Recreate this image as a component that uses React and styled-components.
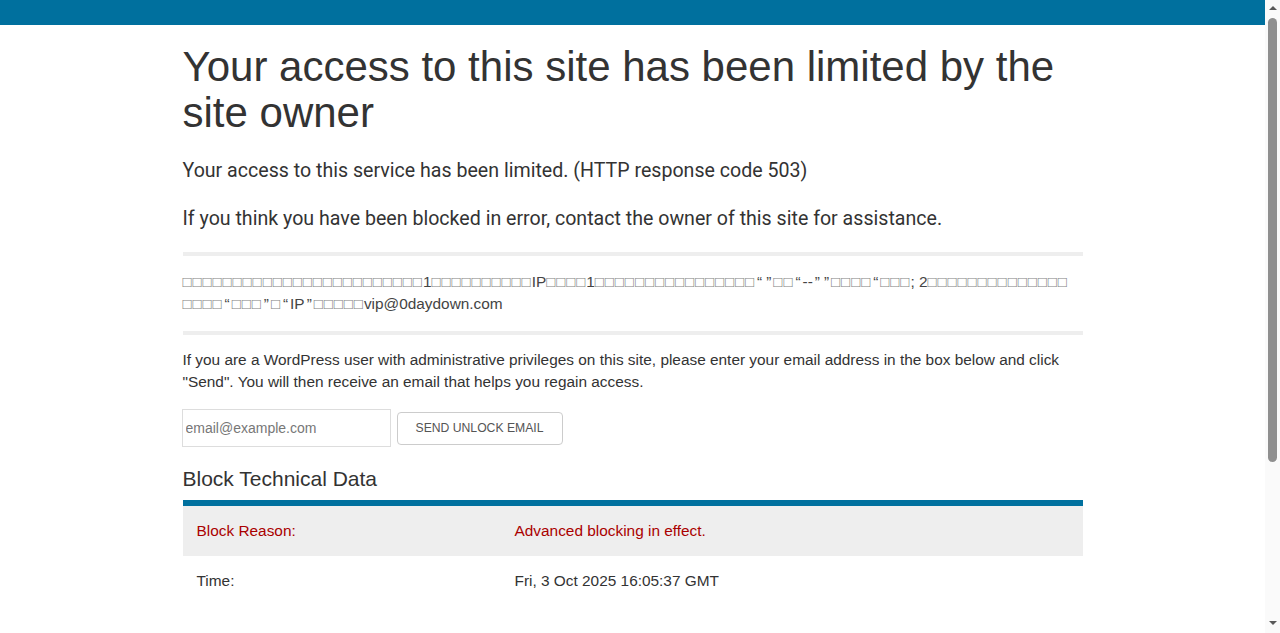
import React from "react";
import styled, { createGlobalStyle } from "styled-components";

const GlobalStyle = createGlobalStyle`
  html, body {
    margin: 0;
    height: 100%;
    overflow: hidden;
  }
  body {
    background: #fff;
    color: #333;
    font-family: "Liberation Sans", Arial, sans-serif;
  }
`;

const Shell = styled.div`
  display: flex;
  height: 100vh;
`;

const Page = styled.div`
  flex: 1;
  min-width: 0;
  overflow-y: auto;
  scrollbar-width: none;
`;

const ScrollTrack = styled.div`
  display: flex;
  flex-direction: column;
  align-items: center;
  width: 15px;
  padding: 6px 0 8px;
  box-sizing: border-box;
  background: #fafafa;
`;

const Arrow = styled.span`
  width: 0;
  height: 0;
  border-left: 4.5px solid transparent;
  border-right: 4.5px solid transparent;
  ${(p) =>
    p.$down ? "border-top: 4px solid #595959;" : "border-bottom: 4px solid #595959;"}
`;

const Thumb = styled.div`
  width: 9px;
  height: 444px;
  margin: 8px 0 auto;
  border-radius: 5px;
  background: #8f8f8f;
`;

const TopBar = styled.div`
  height: 25px;
  background: #00709e;
`;

const Main = styled.main`
  max-width: 900px;
  margin: 0 auto;
  padding-bottom: 40px;
`;

const Title = styled.h1`
  margin: 19px 0 20px;
  font: 400 42px/46px "Liberation Sans", Arial, sans-serif;
  color: #333;
`;

const Lead = styled.p`
  margin: 0 0 19px;
  padding-top: 1px;
  font: 400 19.6px/28px Roboto, "Liberation Sans", sans-serif;
  color: #333;
`;

const Rule = styled.hr`
  border: 0;
  height: 4px;
  margin: 0;
  background: #eeeeee;
`;

const Notice = styled.p`
  margin: 15px 0 16px;
  font-size: 15.4px;
  line-height: 22px;
  color: #444;
  white-space: nowrap;
`;

const Tofu = styled.span`
  letter-spacing: 0.72px;
  color: #808080;
`;

const Quote = styled.span`
  padding: 0 2px;
`;

const Info = styled.p`
  margin: 14px 0 16px;
  font-size: 15.4px;
  line-height: 22px;
  color: #333;
`;

const UnlockForm = styled.form`
  display: flex;
  align-items: center;
  gap: 6px;
  margin-left: -1px;
`;

const EmailInput = styled.input`
  box-sizing: border-box;
  width: 209px;
  height: 38px;
  padding: 0 3px;
  border: 1px solid #dddddd;
  font: 14px "Liberation Sans", Arial, sans-serif;
  color: #333;
  &::placeholder {
    color: #777;
  }
`;

const SendButton = styled.button`
  box-sizing: border-box;
  height: 33px;
  padding: 0 18px;
  border: 1px solid #cccccc;
  border-radius: 4px;
  background: #fff;
  font: 12.2px "Liberation Sans", Arial, sans-serif;
  color: #555;
  text-transform: uppercase;
`;

const SectionTitle = styled.h2`
  margin: ${(p) => p.$top || 20}px 0 9px;
  font: 400 21px/24px "Liberation Sans", Arial, sans-serif;
  color: #333;
`;

const DataTable = styled.div`
  border-top: 6px solid #00709e;
`;

const DataRow = styled.div`
  display: grid;
  grid-template-columns: 318px 1fr;
  align-items: center;
  height: 50px;
  padding: 0 14px;
  background: ${(p) => (p.$shaded ? "#eeeeee" : "transparent")};
  color: ${(p) => (p.$alert ? "#aa0000" : "#333")};
  font-size: 15.4px;
`;

const Footer = styled.p`
  margin: 10px 0;
  font-size: 15.4px;
  line-height: 22px;
  color: #333;
`;

const Link = styled.a`
  color: #00709e;
  text-decoration: none;
`;

const noticeLines = [
  "□□□□□□□□□□□□□□□□□□□□□□□□1□□□□□□□□□□IP□□□□1□□□□□□□□□□□□□□□□“”□□“--””□□□□“□□□; 2□□□□□□□□□□□□□□",
  "□□□□“□□□”□“IP”□□□□□vip@0daydown.com",
];

// boxes and quotes get their own spacing so the runs line up with the original
const spaced = (text) =>
  text.split(/(□+|[“”])/).map((part, i) => {
    if (part.startsWith("□")) return <Tofu key={i}>{part}</Tofu>;
    if (part === "“" || part === "”") return <Quote key={i}>{part}</Quote>;
    return part;
  });

const rows = [
  { label: "Block Reason:", value: "Advanced blocking in effect.", alert: true },
  { label: "Time:", value: "Fri, 3 Oct 2025 16:05:37 GMT" },
];

export default function App() {
  return (
    <Shell>
      <GlobalStyle />
      <Page>
        <TopBar />
        <Main>
          <Title>Your access to this site has been limited by the site owner</Title>
          <Lead>Your access to this service has been limited. (HTTP response code 503)</Lead>
          <Lead>If you think you have been blocked in error, contact the owner of this site for assistance.</Lead>
          <Rule />
          <Notice>
            {spaced(noticeLines[0])}
            <br />
            {spaced(noticeLines[1])}
          </Notice>
          <Rule />
          <Info>
            If you are a WordPress user with administrative privileges on this site, please enter your email
            address in the box below and click "Send". You will then receive an email that helps you regain access.
          </Info>
          <UnlockForm onSubmit={(e) => e.preventDefault()}>
            <EmailInput type="email" placeholder="email@example.com" />
            <SendButton type="submit">Send Unlock Email</SendButton>
          </UnlockForm>
          <SectionTitle>Block Technical Data</SectionTitle>
          <DataTable>
            {rows.map((row, i) => (
              <DataRow key={row.label} $shaded={i % 2 === 0} $alert={row.alert}>
                <span>{row.label}</span>
                <span>{row.value}</span>
              </DataRow>
            ))}
          </DataTable>
          <SectionTitle $top={28}>About Wordfence</SectionTitle>
          <Footer>
            Wordfence is a security plugin installed on over 5 million WordPress sites. The owner of this site is
            using Wordfence to manage access to their site.
          </Footer>
          <Footer>
            Click here to learn more: <Link href="#">Documentation</Link>
          </Footer>
          <Footer>
            Generated by Wordfence at Fri, 3 Oct 2025 16:05:37 GMT.
            <br />
            Your computer's time: .
          </Footer>
        </Main>
      </Page>
      <ScrollTrack aria-hidden="true">
        <Arrow />
        <Thumb />
        <Arrow $down />
      </ScrollTrack>
    </Shell>
  );
}
